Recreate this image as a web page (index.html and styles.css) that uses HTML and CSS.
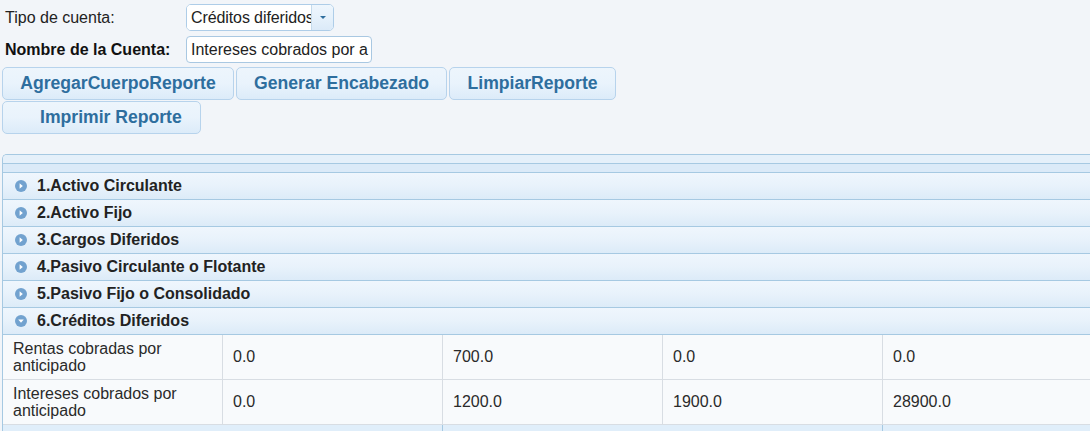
FILE: index.html
```html
<!DOCTYPE html>
<html lang="es">
<head>
<meta charset="utf-8">
<title>Reporte</title>
<link rel="stylesheet" href="styles.css">
</head>
<body>
<div class="page">
  <div class="form">
    <span class="lbl">Tipo de cuenta:</span>
    <div class="select">
      <span class="select-text">Créditos diferidos</span>
      <span class="select-btn"><svg width="8" height="5" viewBox="0 0 8 5"><path d="M1 1 L7 1 L4 4 Z" fill="#2e6e9e"/></svg></span>
    </div>
    <span class="lbl lbl-bold">Nombre de la Cuenta:</span>
    <div class="input">Intereses cobrados por a</div>
  </div>
  <div class="buttons">
    <button class="btn">AgregarCuerpoReporte</button>
    <button class="btn">Generar Encabezado</button>
    <button class="btn">LimpiarReporte</button>
  </div>
  <div class="buttons">
    <button class="btn btn-icon">Imprimir Reporte</button>
  </div>

  <div class="grid">
    <div class="grid-cap"></div>
    <div class="grid-head"></div>
    <div class="group"><svg class="gicon" width="12" height="12" viewBox="0 0 12 12"><circle cx="6" cy="6" r="6" fill="#72a2cf"/><path d="M4.6 3.2 L7.8 6 L4.6 8.8 Z" fill="#fff"/></svg>1.Activo Circulante</div>
    <div class="group"><svg class="gicon" width="12" height="12" viewBox="0 0 12 12"><circle cx="6" cy="6" r="6" fill="#72a2cf"/><path d="M4.6 3.2 L7.8 6 L4.6 8.8 Z" fill="#fff"/></svg>2.Activo Fijo</div>
    <div class="group"><svg class="gicon" width="12" height="12" viewBox="0 0 12 12"><circle cx="6" cy="6" r="6" fill="#72a2cf"/><path d="M4.6 3.2 L7.8 6 L4.6 8.8 Z" fill="#fff"/></svg>3.Cargos Diferidos</div>
    <div class="group"><svg class="gicon" width="12" height="12" viewBox="0 0 12 12"><circle cx="6" cy="6" r="6" fill="#72a2cf"/><path d="M4.6 3.2 L7.8 6 L4.6 8.8 Z" fill="#fff"/></svg>4.Pasivo Circulante o Flotante</div>
    <div class="group"><svg class="gicon" width="12" height="12" viewBox="0 0 12 12"><circle cx="6" cy="6" r="6" fill="#72a2cf"/><path d="M4.6 3.2 L7.8 6 L4.6 8.8 Z" fill="#fff"/></svg>5.Pasivo Fijo o Consolidado</div>
    <div class="group"><svg class="gicon" width="12" height="12" viewBox="0 0 12 12"><circle cx="6" cy="6" r="6" fill="#72a2cf"/><path d="M3.2 4.6 L6 7.8 L8.8 4.6 Z" fill="#fff"/></svg>6.Créditos Diferidos</div>
    <div class="row">
      <div class="cell">Rentas cobradas por anticipado</div>
      <div class="cell">0.0</div>
      <div class="cell">700.0</div>
      <div class="cell">0.0</div>
      <div class="cell">0.0</div>
    </div>
    <div class="row">
      <div class="cell">Intereses cobrados por anticipado</div>
      <div class="cell">0.0</div>
      <div class="cell">1200.0</div>
      <div class="cell">1900.0</div>
      <div class="cell">28900.0</div>
    </div>
    <div class="row foot">
      <div class="fcell"></div>
      <div class="fcell"></div>
      <div class="fcell fcell-last"></div>
    </div>
  </div>
</div>
</body>
</html>
```

FILE: styles.css
```css
html, body {
  margin: 0;
  padding: 0;
  overflow: hidden;
  background: #f2f5f9;
}
body {
  font-family: "Liberation Sans", Arial, sans-serif;
  font-size: 16px;
  color: #222;
}
.page {
  padding: 4px 0 0 2px;
}
.form {
  display: grid;
  grid-template-columns: 184px auto;
  row-gap: 5px;
  align-items: center;
  justify-items: start;
}
.lbl {
  padding-left: 3px;
  color: #222;
}
.lbl-bold {
  font-weight: bold;
  color: #111;
}
.select {
  display: flex;
  width: 148px;
  height: 27px;
  box-sizing: border-box;
  border: 1px solid #aecde8;
  border-radius: 5px;
  overflow: hidden;
  background: #fff;
}
.select-text {
  flex: 0 0 124px;
  box-sizing: border-box;
  padding-left: 4px;
  line-height: 25px;
  white-space: nowrap;
  overflow: hidden;
  letter-spacing: -0.1px;
  background: #fff;
}
.select-btn {
  flex: 1;
  display: flex;
  align-items: center;
  justify-content: center;
  border-left: 1px solid #c5dbec;
  background: linear-gradient(#eef6fd, #e6f1fb 50%, #dbeaf8);
}
.input {
  width: 186px;
  height: 27px;
  box-sizing: border-box;
  border: 1px solid #a9c8e2;
  border-radius: 4px;
  background: #fff;
  padding-left: 4px;
  line-height: 25px;
  white-space: nowrap;
  overflow: hidden;
}
.buttons {
  display: flex;
  gap: 2px;
  margin-top: 4px;
}
.buttons + .buttons {
  margin-top: 1px;
}
.btn {
  height: 33px;
  box-sizing: border-box;
  border: 1px solid #b7d3ec;
  border-radius: 5px;
  background: linear-gradient(#edf5fc, #e9f3fc 50%, #dcebf9);
  color: #2e6e9e;
  font-family: "Liberation Sans", Arial, sans-serif;
  font-weight: bold;
  font-size: 17.6px;
  padding: 0 17.2px;
  margin: 0;
  line-height: 31px;
}
.btn-icon {
  padding-left: 37px;
  padding-right: 18px;
}
.grid {
  margin-top: 20px;
  width: 1103px;
  border-left: 1px solid #a6c9e2;
  border-top: 1px solid #a6c9e2;
  border-top-left-radius: 5px;
}
.grid-cap {
  height: 8px;
  background: #e5f0fa;
  border-bottom: 1px solid #a6c9e2;
  border-top-left-radius: 4px;
}
.grid-head {
  height: 8px;
  background: #dbeaf8;
  border-bottom: 1px solid #a6c9e2;
}
.group {
  height: 26px;
  display: flex;
  align-items: center;
  padding-left: 12px;
  border-bottom: 1px solid #a6c9e2;
  background: linear-gradient(#eff6fd, #e8f2fb 50%, #dcebf8);
  font-weight: bold;
  color: #222;
}
.gicon {
  margin-right: 10px;
  flex: none;
}
.row {
  display: flex;
  background: #f8fafc;
}
.cell {
  flex: 0 0 220px;
  box-sizing: border-box;
  height: 45px;
  border-right: 1px solid #d8dde3;
  border-bottom: 1px solid #d8dde3;
  padding: 0 10px;
  display: flex;
  align-items: center;
  line-height: 17.5px;
  color: #2a2a2a;
}
.foot {
  background: #e0eefa;
}
.fcell {
  flex: 0 0 440px;
  height: 10px;
  box-sizing: border-box;
  border-right: 1px solid #a6c9e2;
}
.fcell-last {
  flex: 0 0 220px;
  border-right: none;
}
```
